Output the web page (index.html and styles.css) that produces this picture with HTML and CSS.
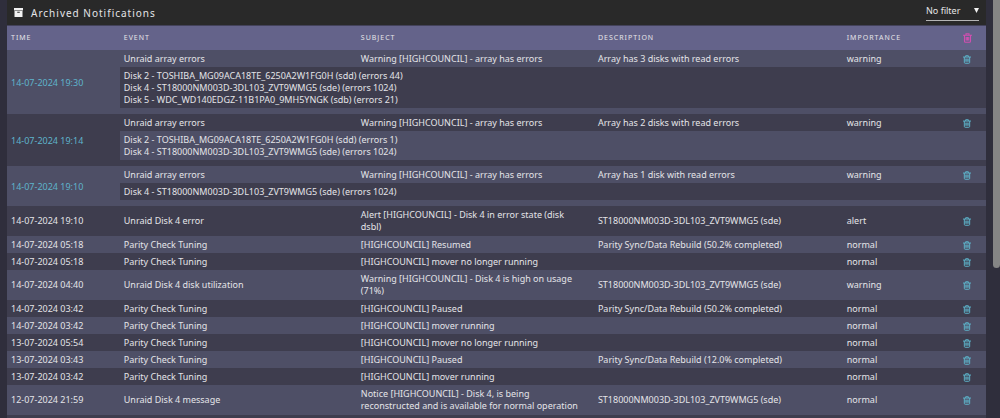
FILE: index.html
```
<!DOCTYPE html>
<html lang="en">
<head>
<meta charset="UTF-8">
<meta name="viewport" content="width=device-width, initial-scale=1.0">
<title>Archived Notifications</title>
<link rel="stylesheet" href="styles.css">
</head>
<body>

<!-- shared icons -->
<svg class="sprite" aria-hidden="true">
    <symbol id="trash" viewBox="0 0 18 20">
        <path d="M0 4.500h18M6 4.500V1.500h6v3M3 4.500v12q0 2 2 2h8q2 0 2-2v-12M6.500 8v7M9 8v7M11.500 8v7" fill="none" stroke="currentColor" stroke-width="2.200"/>
    </symbol>
</svg>

<main class="content">
    <header class="title-bar">
        <svg class="title-icon" viewBox="0 0 18 18" aria-hidden="true">
            <path d="M0 0h18v5H0zM1 6h16v12H1zM6.500 7.500v2h5v-2z" fill="currentColor" fill-rule="evenodd"/>
        </svg>
        <h1>Archived Notifications</h1>
        <select class="filter" aria-label="Filter">
            <option>No filter</option>
            <option>Alerts</option>
            <option>Warnings</option>
            <option>Notices</option>
        </select>
    </header>
    <table class="notifications">
        <thead>
            <tr>
                <th class="col-time">Time</th>
                <th class="col-event">Event</th>
                <th class="col-subject">Subject</th>
                <th class="col-description">Description</th>
                <th class="col-importance">Importance</th>
                <th class="col-delete"><button class="delete-all" aria-label="Delete all"><svg><use href="#trash"/></svg></button></th>
            </tr>
        </thead>
        <tbody>
            <tr>
                <td rowspan="2"><a href="#">14-07-2024 19:30</a></td>
                <td>Unraid array errors</td>
                <td>Warning [HIGHCOUNCIL] - array has errors</td>
                <td>Array has 3 disks with read errors</td>
                <td>warning</td>
                <td class="action"><button aria-label="Delete"><svg><use href="#trash"/></svg></button></td>
            </tr>
            <tr>
                <td class="details" colspan="5">
                    <div>Disk 2 - TOSHIBA_MG09ACA18TE_6250A2W1FG0H (sdd) (errors 44)<br>Disk 4 - ST18000NM003D-3DL103_ZVT9WMG5 (sde) (errors 1024)<br>Disk 5 - WDC_WD140EDGZ-11B1PA0_9MH5YNGK (sdb) (errors 21)</div>
                </td>
            </tr>
        </tbody>
        <tbody class="dark">
            <tr>
                <td rowspan="2"><a href="#">14-07-2024 19:14</a></td>
                <td>Unraid array errors</td>
                <td>Warning [HIGHCOUNCIL] - array has errors</td>
                <td>Array has 2 disks with read errors</td>
                <td>warning</td>
                <td class="action"><button aria-label="Delete"><svg><use href="#trash"/></svg></button></td>
            </tr>
            <tr>
                <td class="details" colspan="5">
                    <div>Disk 2 - TOSHIBA_MG09ACA18TE_6250A2W1FG0H (sdd) (errors 1)<br>Disk 4 - ST18000NM003D-3DL103_ZVT9WMG5 (sde) (errors 1024)</div>
                </td>
            </tr>
        </tbody>
        <tbody>
            <tr>
                <td rowspan="2"><a href="#">14-07-2024 19:10</a></td>
                <td>Unraid array errors</td>
                <td>Warning [HIGHCOUNCIL] - array has errors</td>
                <td>Array has 1 disk with read errors</td>
                <td>warning</td>
                <td class="action"><button aria-label="Delete"><svg><use href="#trash"/></svg></button></td>
            </tr>
            <tr>
                <td class="details" colspan="5">
                    <div>Disk 4 - ST18000NM003D-3DL103_ZVT9WMG5 (sde) (errors 1024)</div>
                </td>
            </tr>
        </tbody>
        <tbody class="dark">
            <tr class="tall">
                <td>14-07-2024 19:10</td>
                <td>Unraid Disk 4 error</td>
                <td>Alert [HIGHCOUNCIL] - Disk 4 in error state (disk dsbl)</td>
                <td>ST18000NM003D-3DL103_ZVT9WMG5 (sde)</td>
                <td>alert</td>
                <td class="action"><button aria-label="Delete"><svg><use href="#trash"/></svg></button></td>
            </tr>
        </tbody>
        <tbody>
            <tr>
                <td>14-07-2024 05:18</td>
                <td>Parity Check Tuning</td>
                <td>[HIGHCOUNCIL] Resumed</td>
                <td>Parity Sync/Data Rebuild (50.2% completed)</td>
                <td>normal</td>
                <td class="action"><button aria-label="Delete"><svg><use href="#trash"/></svg></button></td>
            </tr>
        </tbody>
        <tbody class="dark">
            <tr>
                <td>14-07-2024 05:18</td>
                <td>Parity Check Tuning</td>
                <td>[HIGHCOUNCIL] mover no longer running</td>
                <td></td>
                <td>normal</td>
                <td class="action"><button aria-label="Delete"><svg><use href="#trash"/></svg></button></td>
            </tr>
        </tbody>
        <tbody>
            <tr class="tall">
                <td>14-07-2024 04:40</td>
                <td>Unraid Disk 4 disk utilization</td>
                <td>Warning [HIGHCOUNCIL] - Disk 4 is high on usage (71%)</td>
                <td>ST18000NM003D-3DL103_ZVT9WMG5 (sde)</td>
                <td>warning</td>
                <td class="action"><button aria-label="Delete"><svg><use href="#trash"/></svg></button></td>
            </tr>
        </tbody>
        <tbody class="dark">
            <tr>
                <td>14-07-2024 03:42</td>
                <td>Parity Check Tuning</td>
                <td>[HIGHCOUNCIL] Paused</td>
                <td>Parity Sync/Data Rebuild (50.2% completed)</td>
                <td>normal</td>
                <td class="action"><button aria-label="Delete"><svg><use href="#trash"/></svg></button></td>
            </tr>
        </tbody>
        <tbody>
            <tr>
                <td>14-07-2024 03:42</td>
                <td>Parity Check Tuning</td>
                <td>[HIGHCOUNCIL] mover running</td>
                <td></td>
                <td>normal</td>
                <td class="action"><button aria-label="Delete"><svg><use href="#trash"/></svg></button></td>
            </tr>
        </tbody>
        <tbody class="dark">
            <tr>
                <td>13-07-2024 05:54</td>
                <td>Parity Check Tuning</td>
                <td>[HIGHCOUNCIL] mover no longer running</td>
                <td></td>
                <td>normal</td>
                <td class="action"><button aria-label="Delete"><svg><use href="#trash"/></svg></button></td>
            </tr>
        </tbody>
        <tbody>
            <tr>
                <td>13-07-2024 03:43</td>
                <td>Parity Check Tuning</td>
                <td>[HIGHCOUNCIL] Paused</td>
                <td>Parity Sync/Data Rebuild (12.0% completed)</td>
                <td>normal</td>
                <td class="action"><button aria-label="Delete"><svg><use href="#trash"/></svg></button></td>
            </tr>
        </tbody>
        <tbody class="dark">
            <tr>
                <td>13-07-2024 03:42</td>
                <td>Parity Check Tuning</td>
                <td>[HIGHCOUNCIL] mover running</td>
                <td></td>
                <td>normal</td>
                <td class="action"><button aria-label="Delete"><svg><use href="#trash"/></svg></button></td>
            </tr>
        </tbody>
        <tbody>
            <tr class="tall">
                <td>12-07-2024 21:59</td>
                <td>Unraid Disk 4 message</td>
                <td>Notice [HIGHCOUNCIL] - Disk 4, is being reconstructed and is available for normal operation</td>
                <td>ST18000NM003D-3DL103_ZVT9WMG5 (sde)</td>
                <td>normal</td>
                <td class="action"><button aria-label="Delete"><svg><use href="#trash"/></svg></button></td>
            </tr>
        </tbody>
    </table>
</main>
<div class="scroll-track"><div class="scroll-thumb"></div></div>

</body>
</html>
```
FILE: styles.css
```
body {
    display: flex;
    height: 100vh;
    margin: 0;
    overflow: hidden;
    font-family: "Noto Sans", sans-serif;
    font-size: 9px;
    line-height: 12px;
    color: #e4e4e8;
    background-color: #2f2e3c;
}
.sprite {
    display: none;
}
.content {
    flex: 1;
    margin: 0 7px;
    background-color: #3e3d4e;
}
.title-bar {
    display: flex;
    align-items: center;
    height: 25px;
    padding: 0 7px;
    background-color: #292929;
    border-bottom: 1px solid #43425a;
}
.title-icon {
    width: 9px;
    height: 9px;
    margin-right: 8px;
    color: #f2f2f2;
}
h1 {
    flex: 1;
    margin: 0;
    font-size: 10px;
    font-weight: 400;
    line-height: 12px;
    letter-spacing: 1px;
}
.filter {
    appearance: none;
    width: 53px;
    height: 20px;
    margin-bottom: 4px;
    padding: 0;
    border: none;
    border-bottom: 1px solid #b5b5b5;
    border-radius: 0;
    font-family: inherit;
    font-size: 9px;
    color: #e6e6e6;
    background: url("data:image/svg+xml,%3Csvg xmlns='http://www.w3.org/2000/svg' viewBox='0 0 5 5'%3E%3Cpath d='M0 0h5L2.5 5z' fill='%23f2f2f2'/%3E%3C/svg%3E") no-repeat right center / 5px 5px;
}
.notifications {
    width: 100%;
    table-layout: fixed;
    border-collapse: collapse;
}
th {
    height: 24px;
    padding: 0 4px;
    font-size: 7px;
    font-weight: 400;
    letter-spacing: 1px;
    text-align: left;
    text-transform: uppercase;
    background-color: #64638a;
}
.col-time {
    width: 10.7%;
}
.col-event, .col-subject {
    width: 23.4%;
}
.col-description {
    width: 24.6%;
}
.col-delete {
    width: 3%;
    text-align: center;
}
td {
    padding: 3px 4px 2px;
    vertical-align: middle;
}
td:nth-child(3) {
    padding-right: 12px;
}
.tall td {
    padding-bottom: 3px;
}
tbody {
    background-color: #4e4f66;
}
tbody.dark {
    background-color: #3e3d4e;
}
td.details {
    padding: 0 0 6px;
}
.details div {
    padding: 3px 4px 2px;
    background-color: #3e3d4e;
}
.dark .details div {
    background-color: #4e4f66;
}
a {
    color: #5eb4cb;
    text-decoration: none;
}
button {
    display: inline-flex;
    padding: 0;
    border: none;
    color: #5eb4cb;
    background: none;
    cursor: pointer;
    vertical-align: middle;
}
button svg {
    width: 8px;
    height: 9px;
}
.delete-all {
    color: #d04fb0;
}
.delete-all svg {
    width: 9px;
    height: 10px;
}
.action {
    text-align: center;
}
.scroll-track {
    width: 7px;
}
.scroll-thumb {
    height: 64%;
    border-radius: 0 0 4px 4px;
    background-color: #858585;
}
```
